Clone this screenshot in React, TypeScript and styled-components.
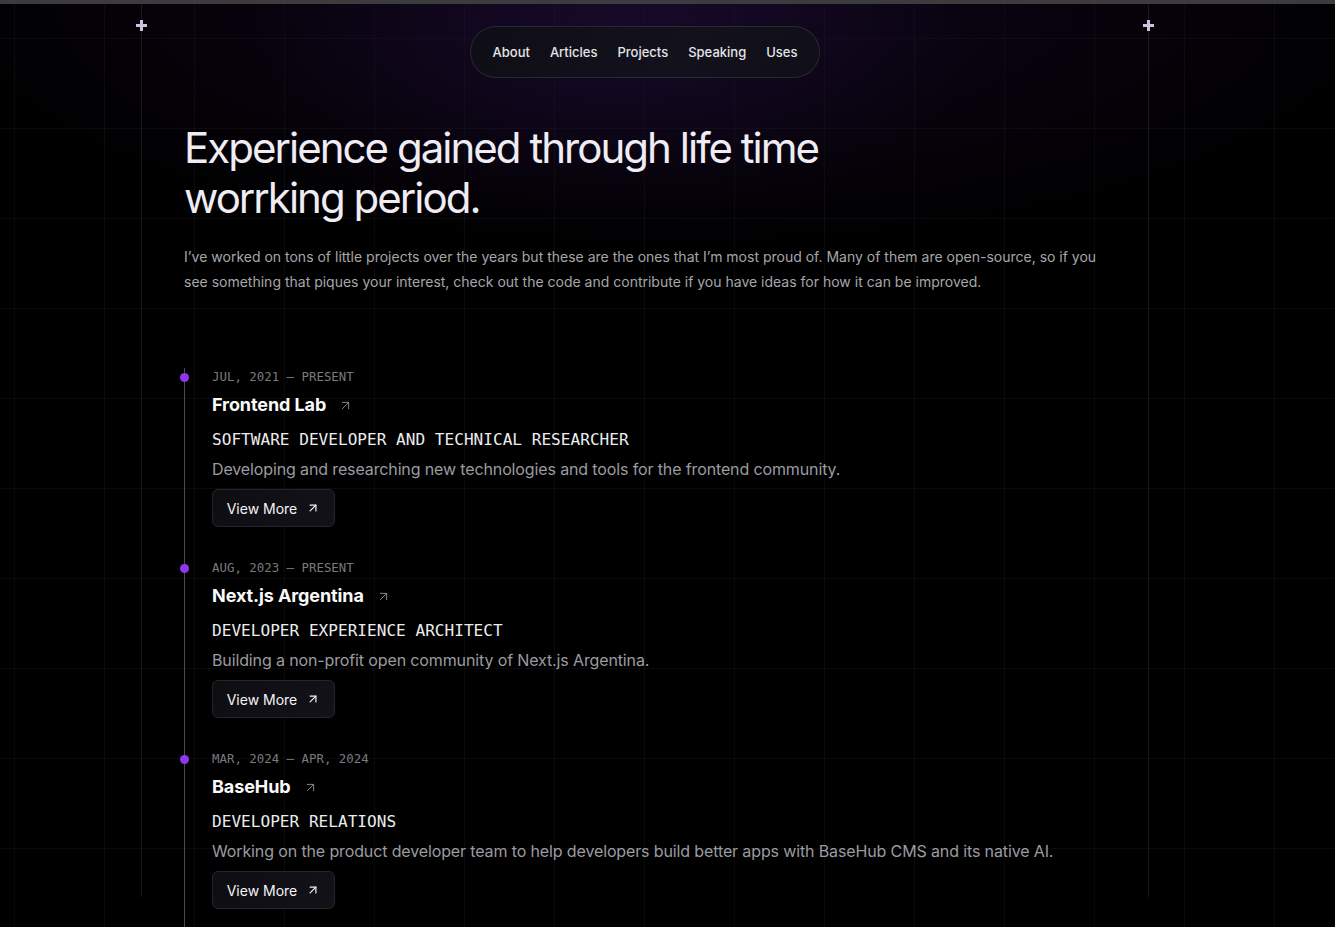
import React from "react";
import styled, { createGlobalStyle } from "styled-components";
import { ArrowUpRight } from "lucide-react";

const GlobalStyle = createGlobalStyle`
  html, body { margin: 0; padding: 0; background: #000; }
  body { font-family: Inter, "Noto Sans", sans-serif; -webkit-font-smoothing: antialiased; }
  * { box-sizing: border-box; }
`;

const Page = styled.div`
  position: relative;
  min-height: 927px;
  height: 927px;
  overflow: hidden;
  background-color: #000;
  background-image:
    radial-gradient(ellipse 520px 260px at 46% 40px, rgba(70, 30, 120, 0.18), rgba(0,0,0,0) 70%),
    radial-gradient(ellipse 1000px 340px at 50% 0px, rgba(25, 10, 45, 0.6), rgba(0,0,0,0) 75%),
    linear-gradient(to right, rgba(255,255,255,0.04) 1px, transparent 1px),
    linear-gradient(to bottom, rgba(255,255,255,0.04) 1px, transparent 1px);
  background-size: 100% 100%, 100% 100%, 90px 90px, 90px 90px;
  background-position: 0 0, 0 0, 14px 38px, 14px 38px;
`;

const TopStrip = styled.div`
  height: 4px;
  background: #3c3c3e;
`;

const Frame = styled.div`
  position: relative;
  width: 1008px;
  margin-left: 141px;
  height: 893px;
  border-left: 1px solid rgba(255, 255, 255, 0.09);
  border-right: 1px solid rgba(255, 255, 255, 0.09);
  display: flex;
  flex-direction: column;
`;

const Plus = styled.span<{ $side: "left" | "right" }>`
  position: absolute;
  top: 16px;
  ${(p) => (p.$side === "left" ? "left: -6px;" : "right: -6px;")}
  width: 11px;
  height: 11px;
  &::before, &::after {
    content: "";
    position: absolute;
    background: #c9c3dd;
  }
  &::before { left: 0; top: 4px; width: 11px; height: 3px; }
  &::after { left: 4px; top: 0; width: 3px; height: 11px; }
`;

const NavWrap = styled.div`
  display: flex;
  justify-content: center;
  padding-top: 22px;
`;

const NavPill = styled.nav`
  display: flex;
  align-items: center;
  gap: 20px;
  height: 52px;
  padding: 0 22px;
  border-radius: 999px;
  background: linear-gradient(120deg, #0f0e17, #13121c 60%, #100f18);
  border: 1px solid rgba(255, 255, 255, 0.1);
`;

const NavLink = styled.a`
  color: #e4e4e7;
  font-size: 13px;
  font-weight: 500;
  text-decoration: none;
`;

const Content = styled.main`
  padding: 45px 42px 0;
  display: flex;
  flex-direction: column;
`;

const Heading = styled.h1`
  margin: 0;
  font-size: 42px;
  line-height: 50px;
  font-weight: 400;
  letter-spacing: -0.047em;
  color: #efecf4;
  max-width: 700px;
`;

const Intro = styled.p`
  margin: 21px 0 0;
  font-size: 14px;
  line-height: 25px;
  color: #a6a6ab;
  max-width: 920px;
`;

const Timeline = styled.ol`
  list-style: none;
  margin: 74px 0 0;
  padding: 0;
  border-left: 1px solid #4a4a4f;
`;

const Entry = styled.li`
  position: relative;
  padding: 0 0 32px 27px;
  display: flex;
  flex-direction: column;
  align-items: flex-start;
`;

const Dot = styled.span`
  position: absolute;
  left: -5px;
  top: 5px;
  width: 9px;
  height: 9px;
  border-radius: 50%;
  background: #9434ec;
`;

const DateText = styled.div`
  font-family: "DejaVu Sans Mono", "Liberation Mono", monospace;
  font-size: 12.4px;
  line-height: 18px;
  color: #7a7a7e;
`;

const TitleRow = styled.a`
  margin-top: 5px;
  display: flex;
  align-items: center;
  gap: 12px;
  color: #fafafa;
  text-decoration: none;
  font-size: 18px;
  line-height: 28px;
  font-weight: 700;
  letter-spacing: -0.005em;
  svg { color: #85858b; }
`;

const Role = styled.div`
  margin-top: 9px;
  font-family: "DejaVu Sans Mono", "Liberation Mono", monospace;
  font-size: 16.1px;
  line-height: 24px;
  color: #ececee;
  text-transform: uppercase;
`;

const Desc = styled.p`
  margin: 5px 0 0;
  font-size: 16px;
  line-height: 24px;
  letter-spacing: -0.008em;
  color: #9b9ba0;
`;

const MoreButton = styled.button`
  margin-top: 8px;
  height: 38px;
  width: 123px;
  display: inline-flex;
  align-items: center;
  justify-content: center;
  gap: 9px;
  background: linear-gradient(135deg, #0d0d12, #121219);
  border: 1px solid #25252b;
  border-radius: 6px;
  color: #f4f4f5;
  font-family: Inter, sans-serif;
  font-size: 14px;
  font-weight: 400;
  cursor: pointer;
`;

const jobs = [
  {
    date: "JUL, 2021 — PRESENT",
    company: "Frontend Lab",
    role: "Software Developer and Technical Researcher",
    desc: "Developing and researching new technologies and tools for the frontend community.",
  },
  {
    date: "AUG, 2023 — PRESENT",
    company: "Next.js Argentina",
    role: "Developer Experience Architect",
    desc: "Building a non-profit open community of Next.js Argentina.",
  },
  {
    date: "MAR, 2024 — APR, 2024",
    company: "BaseHub",
    role: "Developer Relations",
    desc: "Working on the product developer team to help developers build better apps with BaseHub CMS and its native AI.",
  },
];

export default function App() {
  return (
    <>
      <GlobalStyle />
      <Page>
        <TopStrip />
        <Frame>
          <Plus $side="left" />
          <Plus $side="right" />
          <NavWrap>
            <NavPill>
              {["About", "Articles", "Projects", "Speaking", "Uses"].map((l) => (
                <NavLink key={l} href="#">{l}</NavLink>
              ))}
            </NavPill>
          </NavWrap>
          <Content>
            <Heading>Experience gained through life time worrking period.</Heading>
            <Intro>
              I’ve worked on tons of little projects over the years but these are the ones that I’m most proud of. Many of them are open-source, so if you see something that piques your interest, check out the code and contribute if you have ideas for how it can be improved.
            </Intro>
            <Timeline>
              {jobs.map((j) => (
                <Entry key={j.company}>
                  <Dot />
                  <DateText>{j.date}</DateText>
                  <TitleRow href="#">
                    {j.company}
                    <ArrowUpRight size={15} strokeWidth={1.6} />
                  </TitleRow>
                  <Role>{j.role}</Role>
                  <Desc>{j.desc}</Desc>
                  <MoreButton>
                    View More
                    <ArrowUpRight size={14} strokeWidth={2} />
                  </MoreButton>
                </Entry>
              ))}
            </Timeline>
          </Content>
        </Frame>
      </Page>
    </>
  );
}
